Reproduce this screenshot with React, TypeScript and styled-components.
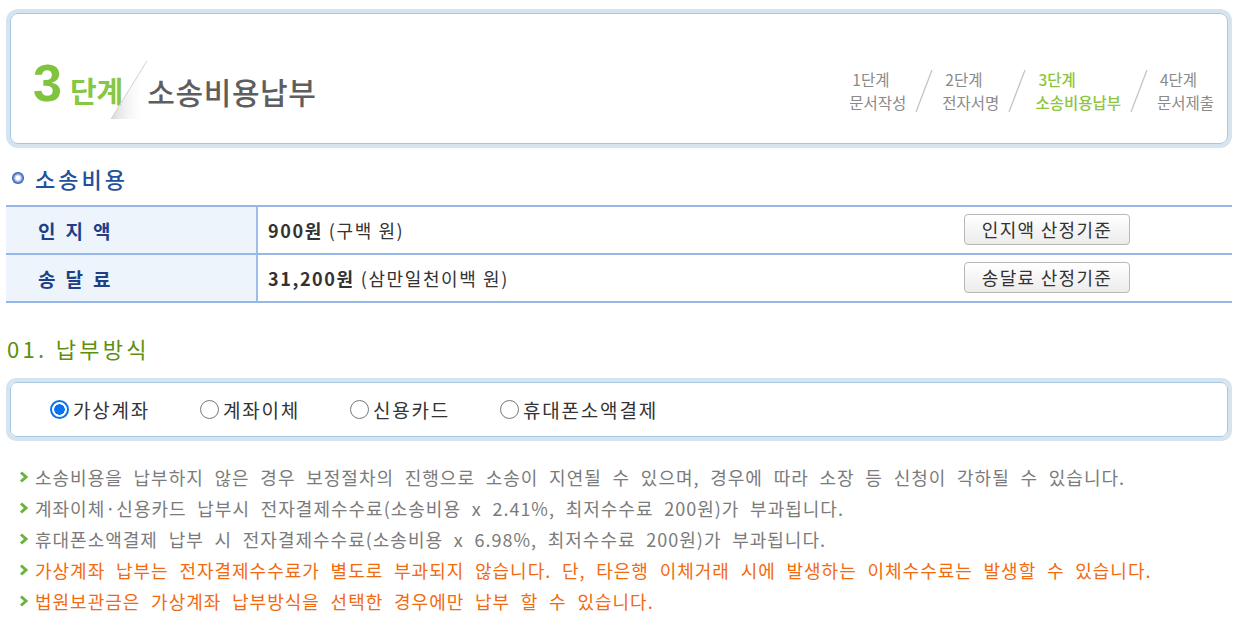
import React from "react";
import styled, { createGlobalStyle } from "styled-components";

const GlobalStyle = createGlobalStyle`
  html, body { margin: 0; padding: 0; background: #fff; }
  body { font-family: "Noto Sans CJK KR", "Noto Sans", sans-serif; }
  * { box-sizing: border-box; }
`;

const Page = styled.div`
  width: 1242px;
  padding: 9px 10px 0 6px;
`;

const HeaderOuter = styled.div`
  border: 4px solid #d6e4ef;
  border-radius: 12px;
  height: 139px;
`;

const HeaderInner = styled.div`
  height: 100%;
  border: 1px solid #a7c7e1;
  border-radius: 8px;
  display: flex;
  align-items: center;
  justify-content: space-between;
  padding: 0 13px 0 22px;
`;

const TitleBlock = styled.div`
  display: flex;
  align-items: flex-end;
  padding-top: 8px;
`;

const StepNum = styled.span`
  font-family: "Liberation Sans", Arial, sans-serif;
  font-weight: 700;
  font-size: 52px;
  line-height: 52px;
  color: #80c33d;
  letter-spacing: -2px;
`;

const StepWord = styled.span`
  font-weight: 700;
  font-size: 29px;
  line-height: 36px;
  color: #86c744;
  margin-left: 10px;
  margin-bottom: 1px;
`;

const Curl = styled.svg`
  width: 44px;
  height: 62px;
  margin-left: -16px;
  margin-bottom: -12px;
`;

const PageTitle = styled.span`
  font-size: 30px;
  line-height: 36px;
  font-weight: 500;
  color: #5e5e5e;
  margin-left: -4px;
  letter-spacing: 0.6px;
`;

const Steps = styled.div`
  display: flex;
  align-items: center;
  padding-top: 24px;
`;

const Step = styled.div<{ $active?: boolean }>`
  display: flex;
  flex-direction: column;
  align-items: center;
  font-size: 15.5px;
  line-height: 23px;
  color: ${(p) => (p.$active ? "#8cc63f" : "#8a8a8a")};
  font-weight: ${(p) => (p.$active ? 500 : 400)};
`;

const StepTop = styled.span`
  align-self: flex-start;
  padding-left: 3px;
`;

const Slash = styled.svg`
  width: 20px;
  height: 46px;
  margin: 0 8px 0 8px;
`;

const SectionTitle = styled.div`
  display: flex;
  align-items: center;
  height: 30px;
  margin-top: 15px;
  padding-left: 6px;
  font-size: 22px;
  font-weight: 500;
  color: #22509b;
  letter-spacing: 3px;
`;

const Ball = styled.span`
  width: 12px;
  height: 12px;
  border-radius: 50%;
  background: radial-gradient(circle at 50% 50%, #ffffff 0 2px, #b8cdf0 3px, #4a74c6 5px, #27499a 6px);
  margin-right: 11px;
`;

const Table = styled.div`
  margin-top: 12px;
  border-top: 2px solid #94b6e9;
  width: 1226px;
`;

const Row = styled.div`
  display: grid;
  grid-template-columns: 250px 2px 1fr;
  height: 48px;
  border-bottom: 2px solid #94b6e9;
`;

const Label = styled.div`
  background: #eef4fc;
  display: flex;
  align-items: center;
  padding-left: 32px;
  font-size: 19px;
  font-weight: 700;
  color: #1f3f86;
  letter-spacing: 10px;
`;

const Divider = styled.div`
  background: #9dbdea;
`;

const Value = styled.div`
  display: flex;
  align-items: center;
  justify-content: space-between;
  padding-left: 10px;
  padding-right: 102px;
  font-size: 18px;
  color: #333;
  letter-spacing: 1.6px;
`;

const Strong = styled.b`
  font-weight: 700;
  margin-right: 6px;
`;

const Button = styled.button`
  width: 166px;
  height: 31px;
  border: 1px solid #b8b8b8;
  border-radius: 4px;
  background: linear-gradient(#ffffff, #ececec);
  font-family: inherit;
  font-size: 18px;
  letter-spacing: 1.3px;
  color: #333;
  padding: 0;
  line-height: 29px;
  margin-top: -2px;
`;

const SubTitle = styled.div`
  margin-top: 30px;
  height: 30px;
  display: flex;
  align-items: center;
  padding-left: 1px;
  font-size: 22px;
  color: #5f8f0f;
  letter-spacing: 3.3px;
`;

const RadioOuter = styled.div`
  margin-top: 15px;
  border: 4px solid #d6e4ef;
  border-radius: 10px;
  height: 63px;
`;

const RadioInner = styled.div`
  height: 100%;
  border: 1px solid #a7c7e1;
  border-radius: 7px;
  display: flex;
  align-items: center;
  padding-left: 39px;
`;

const RadioItem = styled.label`
  min-width: 150px;
  white-space: nowrap;
  display: flex;
  align-items: center;
  font-size: 19px;
  color: #333;
  letter-spacing: 1.8px;
`;

const RadioDot = styled.span<{ $checked?: boolean }>`
  width: 19px;
  height: 19px;
  flex-shrink: 0;
  border-radius: 50%;
  margin-right: 4px;
  border: ${(p) => (p.$checked ? "2px solid #0a72ef" : "1px solid #777")};
  background: ${(p) =>
    p.$checked
      ? "radial-gradient(circle, #0a72ef 0 5px, #fff 5.5px)"
      : "#fff"};
`;

const Notes = styled.ul`
  list-style: none;
  margin: 20px 0 0;
  padding: 0 0 0 13px;
`;

const Note = styled.li<{ $warn?: boolean }>`
  display: flex;
  align-items: center;
  height: 31px;
  white-space: nowrap;
  font-size: 18px;
  letter-spacing: 1px;
  word-spacing: 5.7px;
  color: ${(p) => (p.$warn ? "#f26a10" : "#7b7b7b")};
`;

const Chevron = styled.svg`
  width: 10px;
  height: 12px;
  margin-right: 6px;
  flex-shrink: 0;
`;

const steps = [
  { n: "1단계", t: "문서작성" },
  { n: "2단계", t: "전자서명" },
  { n: "3단계", t: "소송비용납부", active: true },
  { n: "4단계", t: "문서제출" },
];

const notes = [
  { t: "소송비용을 납부하지 않은 경우 보정절차의 진행으로 소송이 지연될 수 있으며, 경우에 따라 소장 등 신청이 각하될 수 있습니다." },
  { t: "계좌이체·신용카드 납부시 전자결제수수료(소송비용 x 2.41%, 최저수수료 200원)가 부과됩니다." },
  { t: "휴대폰소액결제 납부 시 전자결제수수료(소송비용 x 6.98%, 최저수수료 200원)가 부과됩니다." },
  { t: "가상계좌 납부는 전자결제수수료가 별도로 부과되지 않습니다. 단, 타은행 이체거래 시에 발생하는 이체수수료는 발생할 수 있습니다.", warn: true },
  { t: "법원보관금은 가상계좌 납부방식을 선택한 경우에만 납부 할 수 있습니다.", warn: true },
];

const radios = [
  { t: "가상계좌", checked: true },
  { t: "계좌이체" },
  { t: "신용카드" },
  { t: "휴대폰소액결제" },
];

export default function App() {
  return (
    <>
      <GlobalStyle />
      <Page>
        <HeaderOuter>
          <HeaderInner>
            <TitleBlock>
              <StepNum>3</StepNum>
              <StepWord>단계</StepWord>
              <Curl viewBox="0 0 44 62">
                <defs>
                  <linearGradient id="cg" x1="0" y1="0" x2="1" y2="0">
                    <stop offset="0" stopColor="#cfcfcf" />
                    <stop offset="1" stopColor="#ffffff" stopOpacity="0" />
                  </linearGradient>
                </defs>
                <polygon points="40,2 4,60 38,60 30,40" fill="url(#cg)" opacity="0.8" />
                <line x1="40" y1="2" x2="4" y2="60" stroke="#d2d2d2" strokeWidth="1" />
              </Curl>
              <PageTitle>소송비용납부</PageTitle>
            </TitleBlock>
            <Steps>
              {steps.map((s, i) => (
                <React.Fragment key={s.n}>
                  {i > 0 && (
                    <Slash viewBox="0 0 20 46">
                      <line x1="18" y1="2" x2="2" y2="44" stroke="#c4c4c4" strokeWidth="1.3" />
                    </Slash>
                  )}
                  <Step $active={s.active}>
                    <StepTop>{s.n}</StepTop>
                    <span>{s.t}</span>
                  </Step>
                </React.Fragment>
              ))}
            </Steps>
          </HeaderInner>
        </HeaderOuter>

        <SectionTitle>
          <Ball />
          소송비용
        </SectionTitle>

        <Table>
          <Row>
            <Label>인지액</Label>
            <Divider />
            <Value>
              <span>
                <Strong>900원</Strong>(구백 원)
              </span>
              <Button>인지액 산정기준</Button>
            </Value>
          </Row>
          <Row>
            <Label>송달료</Label>
            <Divider />
            <Value>
              <span>
                <Strong>31,200원</Strong>(삼만일천이백 원)
              </span>
              <Button>송달료 산정기준</Button>
            </Value>
          </Row>
        </Table>

        <SubTitle>01. 납부방식</SubTitle>

        <RadioOuter>
          <RadioInner>
            {radios.map((r) => (
              <RadioItem key={r.t}>
                <RadioDot $checked={r.checked} />
                {r.t}
              </RadioItem>
            ))}
          </RadioInner>
        </RadioOuter>

        <Notes>
          {notes.map((n, i) => (
            <Note key={i} $warn={n.warn}>
              <Chevron viewBox="0 0 10 12">
                <polyline points="2,1.5 7,6 2,10.5" fill="none" stroke="#6cb33e" strokeWidth="3" />
              </Chevron>
              {n.t}
            </Note>
          ))}
        </Notes>
      </Page>
    </>
  );
}
